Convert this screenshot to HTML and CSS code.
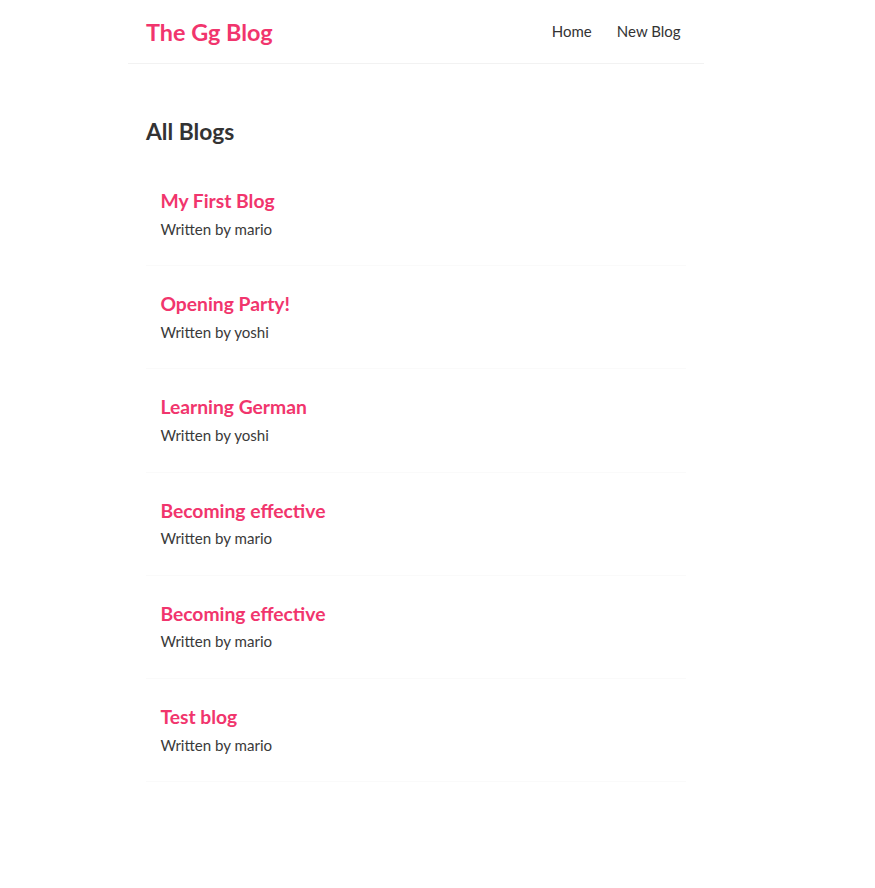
FILE: index.html
```html
<!DOCTYPE html>
<html lang="en">
<head>
<meta charset="utf-8">
<title>The Gg Blog</title>
<link rel="stylesheet" href="styles.css">
</head>
<body>
<div class="app">
  <nav class="navbar">
    <h1 class="brand">The Gg Blog</h1>
    <div class="links">
      <a href="#" class="link">Home</a>
      <a href="#" class="link">New Blog</a>
    </div>
  </nav>
  <main class="content">
    <h2 class="page-title">All Blogs</h2>
    <div class="blog-list">
      <div class="blog-preview"><h2 class="blog-title">My First Blog</h2><p class="blog-author">Written by mario</p></div>
      <div class="blog-preview"><h2 class="blog-title">Opening Party!</h2><p class="blog-author">Written by yoshi</p></div>
      <div class="blog-preview"><h2 class="blog-title">Learning German</h2><p class="blog-author">Written by yoshi</p></div>
      <div class="blog-preview"><h2 class="blog-title">Becoming effective</h2><p class="blog-author">Written by mario</p></div>
      <div class="blog-preview"><h2 class="blog-title">Becoming effective</h2><p class="blog-author">Written by mario</p></div>
      <div class="blog-preview"><h2 class="blog-title">Test blog</h2><p class="blog-author">Written by mario</p></div>
    </div>
  </main>
</div>
</body>
</html>
```

FILE: styles.css
```css
* {
  margin: 0;
  padding: 0;
  box-sizing: content-box;
}
body {
  margin: 0;
  background: #ffffff;
  font-family: "Lato", "Noto Sans", sans-serif;
  color: #333333;
}
.app {
  padding-left: 128px;
}
.navbar {
  width: 540px;
  padding: 18px;
  display: flex;
  align-items: center;
  border-bottom: 1px solid #f2f2f2;
}
.brand {
  font-size: 23.4px;
  line-height: 28px;
  font-weight: 700;
  color: #f1356d;
  margin-bottom: -1px;
}
.links {
  margin-left: auto;
  display: flex;
}
.link {
  margin-left: 14.4px;
  padding: 0 5.4px;
  font-size: 15px;
  line-height: 27px;
  color: #333333;
  text-decoration: none;
}
.content {
  width: 540px;
  margin-top: 36px;
  padding: 18px;
}
.page-title {
  font-size: 22.8px;
  line-height: 27px;
  font-weight: 700;
  color: #333333;
}
.blog-list {
  margin-top: 36px;
  display: flex;
  flex-direction: column;
  gap: 18px;
}
.blog-preview {
  padding: 9px 14.4px 27.5px;
  border-bottom: 1px solid #fafafa;
}
.blog-title {
  font-size: 19.3px;
  line-height: 22.5px;
  font-weight: 700;
  color: #f1356d;
  margin-bottom: 7.2px;
}
.blog-author {
  font-size: 15.1px;
  line-height: 18px;
  color: #3a3a3a;
}
```
